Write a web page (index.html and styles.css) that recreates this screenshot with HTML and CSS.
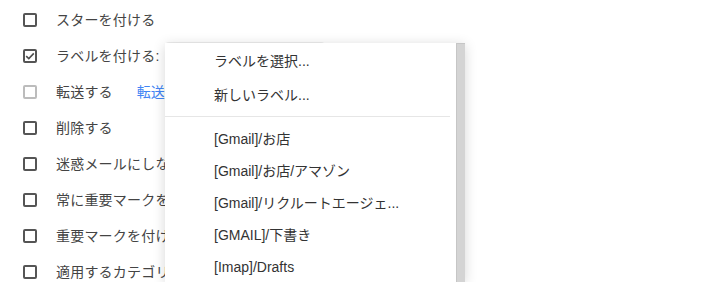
FILE: index.html
```html
<!DOCTYPE html>
<html lang="ja">
<head>
  <meta charset="UTF-8" />
  <title>フィルタ</title>
  <link rel="stylesheet" href="styles.css">
</head>
<body>
  <div class="filter">
    <ul class="actions">
      <li class="action">
        <span class="check"></span>
        <span class="action__label">スターを付ける</span>
      </li>
      <li class="action">
        <span class="check check--on">
          <svg viewBox="0 0 14 14" width="14" height="14"><path d="M3.2 7.2 L5.8 9.6 L10.8 4.4" fill="none" stroke="#4d4d4d" stroke-width="1.6"/></svg>
        </span>
        <span class="action__label">ラベルを付ける:</span>
        <span class="select"></span>
      </li>
      <li class="action">
        <span class="check check--off"></span>
        <span class="action__label">転送する</span>
        <a class="action__link" href="#">転送先</a>
      </li>
      <li class="action">
        <span class="check"></span>
        <span class="action__label">削除する</span>
      </li>
      <li class="action">
        <span class="check"></span>
        <span class="action__label">迷惑メールにしない</span>
      </li>
      <li class="action">
        <span class="check"></span>
        <span class="action__label">常に重要マークを付ける</span>
      </li>
      <li class="action">
        <span class="check"></span>
        <span class="action__label">重要マークを付けない</span>
      </li>
      <li class="action">
        <span class="check"></span>
        <span class="action__label">適用するカテゴリ:</span>
      </li>
    </ul>

    <div class="menu">
      <div class="menu__list">
        <div class="menu__item menu__item--top">ラベルを選択...</div>
        <div class="menu__item menu__item--top">新しいラベル...</div>
        <div class="menu__sep"></div>
        <div class="menu__item">[Gmail]/お店</div>
        <div class="menu__item">[Gmail]/お店/アマゾン</div>
        <div class="menu__item">[Gmail]/リクルートエージェ...</div>
        <div class="menu__item">[GMAIL]/下書き</div>
        <div class="menu__item">[Imap]/Drafts</div>
      </div>
      <div class="menu__scroll"></div>
    </div>
  </div>
</body>
</html>
```

FILE: styles.css
```css
* {
  box-sizing: border-box;
  margin: 0;
  padding: 0;
}
body {
  font-family: 'Liberation Sans', 'Noto Sans CJK JP', sans-serif;
  font-size: 14px;
  color: #444;
  background: #fff;
  overflow: hidden;
}
.filter {
  position: relative;
  height: 282px;
  padding-top: 1px;
  overflow: hidden;
}
.actions {
  list-style: none;
}
.action {
  display: flex;
  align-items: center;
  height: 36px;
  padding-left: 23px;
}
.check {
  width: 14px;
  height: 14px;
  border: 2px solid #555;
  border-radius: 2px;
  margin: 1px 19px 0 0;
  display: flex;
  align-items: center;
  justify-content: center;
  flex-shrink: 0;
}
.check svg {
  flex-shrink: 0;
}
.check--off {
  border-color: #bcbcbc;
}
.action__label {
  white-space: nowrap;
  letter-spacing: 0.2px;
}
.action__link {
  margin-left: 24px;
  color: #4285f4;
  text-decoration: none;
  white-space: nowrap;
}
.select {
  width: 160px;
  height: 26px;
  margin-left: 5px;
  background: #eeeeee;
  border-radius: 4px;
}
.menu {
  position: absolute;
  left: 165px;
  top: 43px;
  width: 300px;
  height: 239px;
  display: flex;
  background: #fff;
  box-shadow: 0 2px 12px rgba(0, 0, 0, 0.16);
  color: #333;
}
.menu__list {
  flex: 1;
  padding-top: 1px;
}
.menu__item {
  height: 32px;
  line-height: 32px;
  padding-left: 49px;
  white-space: nowrap;
}
.menu__item--top {
  height: 34px;
  line-height: 34px;
}
.menu__sep {
  height: 1px;
  margin: 4px 6px 6px 0;
  background: #e6e6e6;
}
.menu__scroll {
  width: 9px;
  background: #d4d4d4;
  border-left: 1px solid #c6c6c6;
  border-top: 1px solid #c6c6c6;
}
```
